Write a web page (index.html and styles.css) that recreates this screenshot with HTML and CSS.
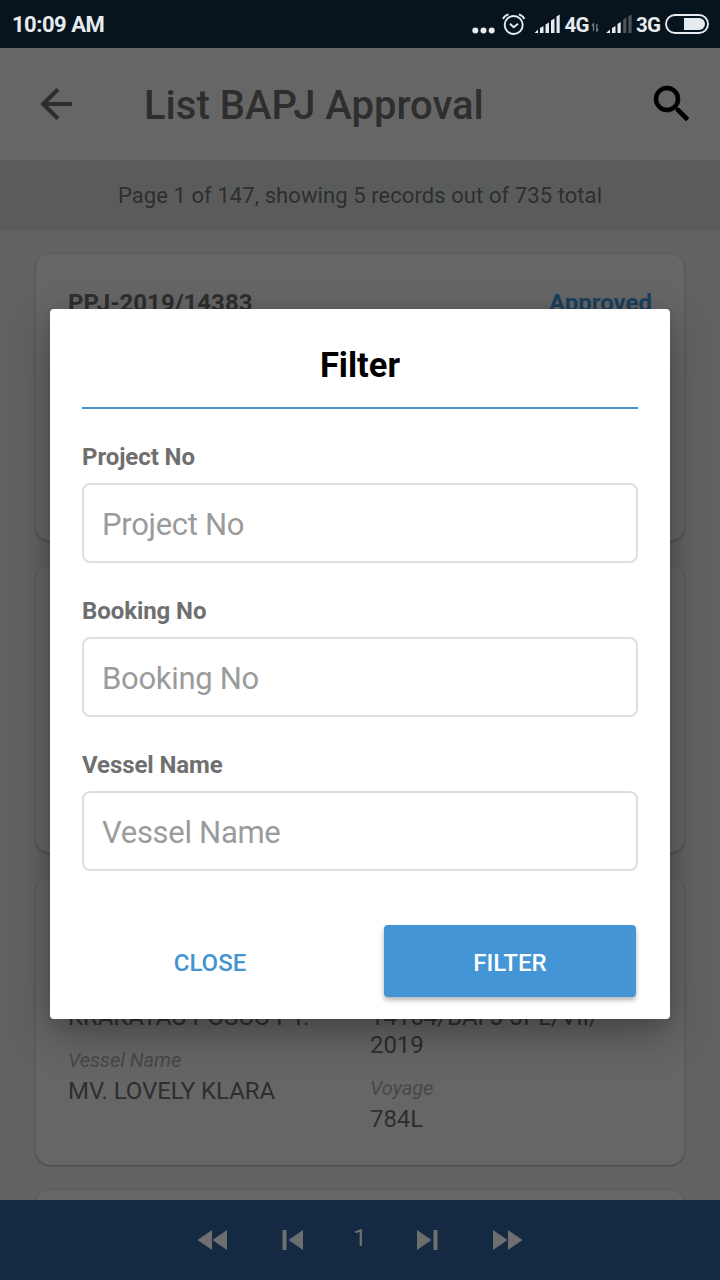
FILE: index.html
```html
<!DOCTYPE html>
<html lang="en">
<head>
<meta charset="utf-8">
<title>List BAPJ Approval</title>
<link rel="stylesheet" href="styles.css">
</head>
<body>
<div class="screen">
  <div class="status">
    <span class="time">10:09 AM</span>
    <svg class="status-icons" width="250" height="48" viewBox="0 0 250 48">
      <g fill="#e6ebef">
        <circle cx="5.300" cy="30.500" r="3"/><circle cx="13.500" cy="30.500" r="3"/><circle cx="21.700" cy="30.500" r="3"/>
        <path d="M64.500 33l3.500-3.500v3.500zM70 28l3.500-2v7H70zM75.500 24.500l3.500-2V33h-3.500zM81 20.500l3.500-2V33H81zM86.500 16.500l3.200-2V33h-3.200z"/>
        <path d="M136 33l4-3.500v3.500zM142 28l3.500-2v7H142zM147.500 24l3.200-2V33h-3.200z"/>
      </g>
      <g fill="#4c555d"><path d="M153.200 19.500l3.200-2V33h-3.200zM158.400 16.500l3.200-2V33h-3.200z"/></g>
      <g fill="none" stroke="#e6ebef" stroke-width="1.900">
        <circle cx="43.700" cy="25" r="9"/>
        <path d="M40 23.700l3.700 3.500 4.300-3.500M33 19q1.500-3.500 5.500-4.600M54.300 19q-1.500-3.500-5.500-4.600"/>
        <rect x="196" y="15" width="42" height="18" rx="9"/>
      </g>
      <path d="M214 18h15a6 6 0 0 1 0 12h-15z" fill="#e6ebef"/>
      <path d="M123.500 31v-7l-1.500 1.800M126.800 24v7l1.500-1.800" fill="none" stroke="#77818a" stroke-width="1.300"/>
      <text class="net" x="94.500" y="31.500">4G</text>
      <text class="net" x="166" y="31.500">3G</text>
    </svg>
  </div>
  <header class="appbar">
    <svg class="back" width="36" height="36" viewBox="0 0 36 36"><path d="M34 18H5M20 3.500L5 18l15 14.500" fill="none" stroke="#2d2d2d" stroke-width="4"/></svg>
    <h1 class="title">List BAPJ Approval</h1>
    <svg class="search" width="48" height="48" viewBox="0 0 24 24"><path stroke="#000" stroke-width=".35" d="M15.500 14h-.79l-.28-.27A6.471 6.471 0 0 0 16 9.500 6.500 6.500 0 1 0 9.500 16c1.610 0 3.090-.59 4.230-1.570l.27.28v.79l5 4.990L20.490 19l-4.990-5zm-6 0C7.010 14 5 11.990 5 9.500S7.010 5 9.500 5 14 7.010 14 9.500 11.990 14 9.500 14z"/></svg>
  </header>
  <div class="summary"><span>Page 1 of 147, showing 5 records out of 735 total</span></div>
  <main class="list">
    <article class="card head"><strong class="number">PPJ-2019/14383</strong><strong class="state">Approved</strong></article>
    <article class="card"></article>
    <article class="card details">
      <div class="col">
        <div class="value">KRAKATAU POSCO PT.</div>
        <div class="label">Vessel Name</div>
        <div class="value">MV. LOVELY KLARA</div>
      </div>
      <div class="col">
        <div class="value">14164/BAPJ-JPL/VII/<br>2019</div>
        <div class="label">Voyage</div>
        <div class="value">784L</div>
      </div>
    </article>
    <article class="card"></article>
  </main>
  <nav class="pager">
    <svg width="32" height="24" viewBox="0 0 32 24"><path d="M15 2v20L0.500 12zM30 2v20L15.500 12z"/></svg>
    <svg width="24" height="24" viewBox="0 0 24 24"><path d="M3.500 2h4v20h-4zM24 2v20L9.500 12z"/></svg>
    <span class="page">1</span>
    <svg width="24" height="24" viewBox="0 0 24 24"><path d="M16.500 2h4v20h-4zM0 2v20L14.500 12z"/></svg>
    <svg width="32" height="24" viewBox="0 0 32 24"><path d="M2 2v20L16.500 12zM17 2v20L31.500 12z"/></svg>
  </nav>
  <section class="modal">
    <h2 class="modal-title">Filter</h2>
    <div class="field"><label>Project No</label><div class="input">Project No</div></div>
    <div class="field"><label>Booking No</label><div class="input">Booking No</div></div>
    <div class="field"><label>Vessel Name</label><div class="input">Vessel Name</div></div>
    <div class="actions"><button class="btn close">CLOSE</button><button class="btn apply">FILTER</button></div>
  </section>
</div>
</body>
</html>
```
FILE: styles.css
```css
* { box-sizing: border-box; }
body { margin: 0; font-family: Roboto, sans-serif; }
.screen { position: relative; width: 720px; height: 1280px; overflow: hidden; display: flex; flex-direction: column; background: #626262; color: #2e2e2e; }
.status { height: 48px; flex: none; display: flex; align-items: center; justify-content: space-between; background: #07131d; color: #e6ebef; padding-left: 12px; }
.time { font-size: 22px; font-weight: 700; line-height: 46px; letter-spacing: -.5px; padding-top: 2px; }
.net { font-size: 20.500px; font-weight: 700; fill: #e6ebef; letter-spacing: -.8px; }
.appbar { height: 112px; flex: none; display: flex; align-items: center; background: #666; padding: 0 24px 0 38px; }
.title { margin: 4px 0 0 70px; font-size: 40px; font-weight: 500; line-height: 48px; flex: 1; white-space: nowrap; }
.summary { height: 70px; flex: none; display: flex; align-items: center; justify-content: center; padding-top: 1px; background: #5a5c5b; font-size: 22px; letter-spacing: .08px; }
.list { flex: 1; min-height: 0; overflow: hidden; padding: 24px 36px 0; display: flex; flex-direction: column; gap: 24px; }
.card { height: 287px; margin-bottom: 1px; flex: none; border-radius: 14px; background: #666; box-shadow: 0 1px 2px rgba(0,0,0,.28), 0 0 2px rgba(0,0,0,.12); }
.head { display: flex; justify-content: space-between; padding: 34px 32px; font-size: 24px; line-height: 30px; }
.state { color: #1b3f5d; }
.details { display: grid; grid-template-columns: 302px 1fr; padding: 125px 32px 0; font-size: 24px; line-height: 28px; letter-spacing: -.06px; }
.label { margin: 15px 0 3px; font-size: 20px; font-style: italic; color: #484848; }
.pager { height: 80px; flex: none; display: flex; align-items: center; justify-content: space-between; padding: 0 197px; background: #142a42; fill: #6e6e70; }
.page { font-size: 24px; color: #6e7276; padding-bottom: 4px; }
.modal { position: absolute; left: 50px; top: 309px; width: 620px; height: 710px; padding: 32px; border-radius: 4px; background: #fff; box-shadow: 0 16px 44px rgba(0,0,0,.3), 0 4px 16px rgba(0,0,0,.1); }
.modal-title { height: 68px; margin: 0; border-bottom: 2px solid #4a93cc; text-align: center; font-size: 34.500px; line-height: 48px; font-weight: 700; color: #000; }
.field { padding-top: 34px; height: 154px; color: #6f6f6f; }
.field label { display: block; height: 40px; font-size: 24px; line-height: 29px; font-weight: 700; letter-spacing: -.08px; }
.input { height: 80px; border: 2px solid #dedede; border-radius: 8px; padding: 2px 0 0 18px; font-size: 31px; line-height: 76px; letter-spacing: -.3px; color: #9b9b9b; }
.actions { display: flex; gap: 48px; padding: 54px 2px 0; justify-content: flex-end; }
.btn { width: 252px; height: 72px; border: 0; border-radius: 4px; padding: 4px 0 0; font: 500 24px Roboto, sans-serif; background: #fff; color: #4494d3; }
.apply { background: #4495d5; color: #fff; box-shadow: 0 3px 5px rgba(0,0,0,.3); }
```
